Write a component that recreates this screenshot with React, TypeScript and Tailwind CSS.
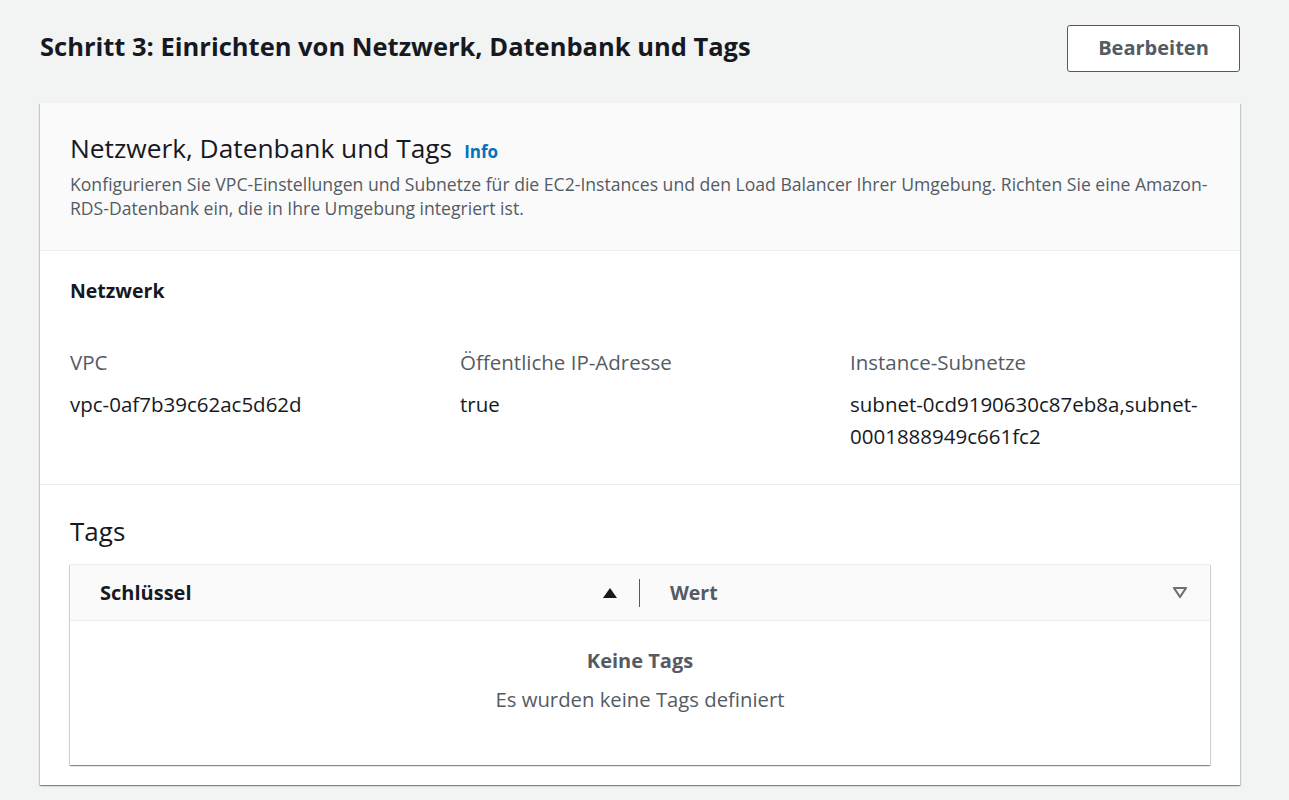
import React from 'react';

const font = { fontFamily: '"Open Sans", "Liberation Sans", sans-serif' };

const fields = [
  { label: 'VPC', value: 'vpc-0af7b39c62ac5d62d' },
  { label: 'Öffentliche IP-Adresse', value: 'true' },
  { label: 'Instance-Subnetze', value: 'subnet-0cd9190630c87eb8a,subnet-0001888949c661fc2' },
];

export default function App() {
  return (
    <div className="min-h-[800px] bg-[#f2f3f3] pl-[40px] pr-[49px] pt-[25px] pb-[15px] text-[#16191f]" style={font}>
      {/* Step header */}
      <div className="flex items-center justify-between">
        <h2 className="pb-[6px] text-[25.5px] font-bold leading-[32px]">Schritt 3: Einrichten von Netzwerk, Datenbank und Tags</h2>
        <button className="h-[47px] w-[173px] rounded-[3px] border border-[#545b64] bg-white pb-[2px] text-[20px] font-bold text-[#545b64]">
          Bearbeiten
        </button>
      </div>

      {/* Card */}
      <div className="mt-[31px] bg-white shadow-[0_1px_1px_0_rgba(0,28,36,0.3),1px_1px_1px_0_rgba(0,28,36,0.15),-1px_1px_1px_0_rgba(0,28,36,0.15)]">
        <div className="border-b border-[#eaeded] bg-[#fafafa] px-[30px] pt-[28px] pb-[30px]">
          <div className="flex items-baseline gap-[12px]">
            <h2 className="text-[26.3px] leading-[34px]">Netzwerk, Datenbank und Tags</h2>
            <a className="text-[17px] font-bold text-[#0073bb]">Info</a>
          </div>
          <p className="mt-[7px] text-[17.6px] leading-[24px] text-[#545b64]">
            Konfigurieren Sie VPC-Einstellungen und Subnetze für die EC2-Instances und den Load Balancer Ihrer Umgebung. Richten Sie eine Amazon-RDS-Datenbank ein, die in Ihre Umgebung integriert ist.
          </p>
        </div>

        {/* Netzwerk */}
        <div className="border-b border-[#eaeded] px-[30px] pt-[27px] pb-[32px]">
          <h3 className="text-[19.5px] font-bold leading-[26px]">Netzwerk</h3>
          <div className="mt-[45px] grid grid-cols-3 gap-x-[30px]">
            {fields.map((f) => (
              <div key={f.label}>
                <div className="text-[20.5px] leading-[26px] text-[#545b64]">{f.label}</div>
                <div className="mt-[13px] text-[20.5px] leading-[32px] [overflow-wrap:anywhere]">{f.value}</div>
              </div>
            ))}
          </div>
        </div>

        {/* Tags */}
        <div className="px-[30px] pt-[29px] pb-[20px]">
          <h2 className="text-[26px] leading-[34px]">Tags</h2>
          <div className="mt-[16px] border-t border-[#eaeded] bg-white shadow-[0_1px_1px_0_rgba(0,28,36,0.3),1px_1px_1px_0_rgba(0,28,36,0.15),-1px_1px_1px_0_rgba(0,28,36,0.15)]">
            <div className="flex h-[56px] items-center border-b border-[#eaeded] bg-[#fafafa]">
              <div className="flex flex-1 items-center justify-between pl-[30px] pr-[21px]">
                <span className="text-[20px] font-bold">Schlüssel</span>
                <svg width="16" height="12" viewBox="0 0 16 12">
                  <path d="M1 11 L8 1 L15 11 Z" fill="#16191f" />
                </svg>
              </div>
              <div className="h-[28px] w-px bg-[#545b64]" />
              <div className="flex flex-1 items-center justify-between pl-[30px] pr-[22px]">
                <span className="text-[19.5px] font-bold text-[#545b64]">Wert</span>
                <svg width="16" height="13" viewBox="0 0 16 13">
                  <path d="M2 2 L14 2 L8 11 Z" fill="none" stroke="#687078" strokeWidth="2.2" strokeLinejoin="round" />
                </svg>
              </div>
            </div>
            <div className="flex h-[144px] flex-col items-center pt-[27px] text-[#545b64]">
              <div className="text-[20px] font-bold leading-[26px]">Keine Tags</div>
              <div className="mt-[12px] text-[20.3px] leading-[26px]">Es wurden keine Tags definiert</div>
            </div>
          </div>
        </div>
      </div>
    </div>
  );
}
